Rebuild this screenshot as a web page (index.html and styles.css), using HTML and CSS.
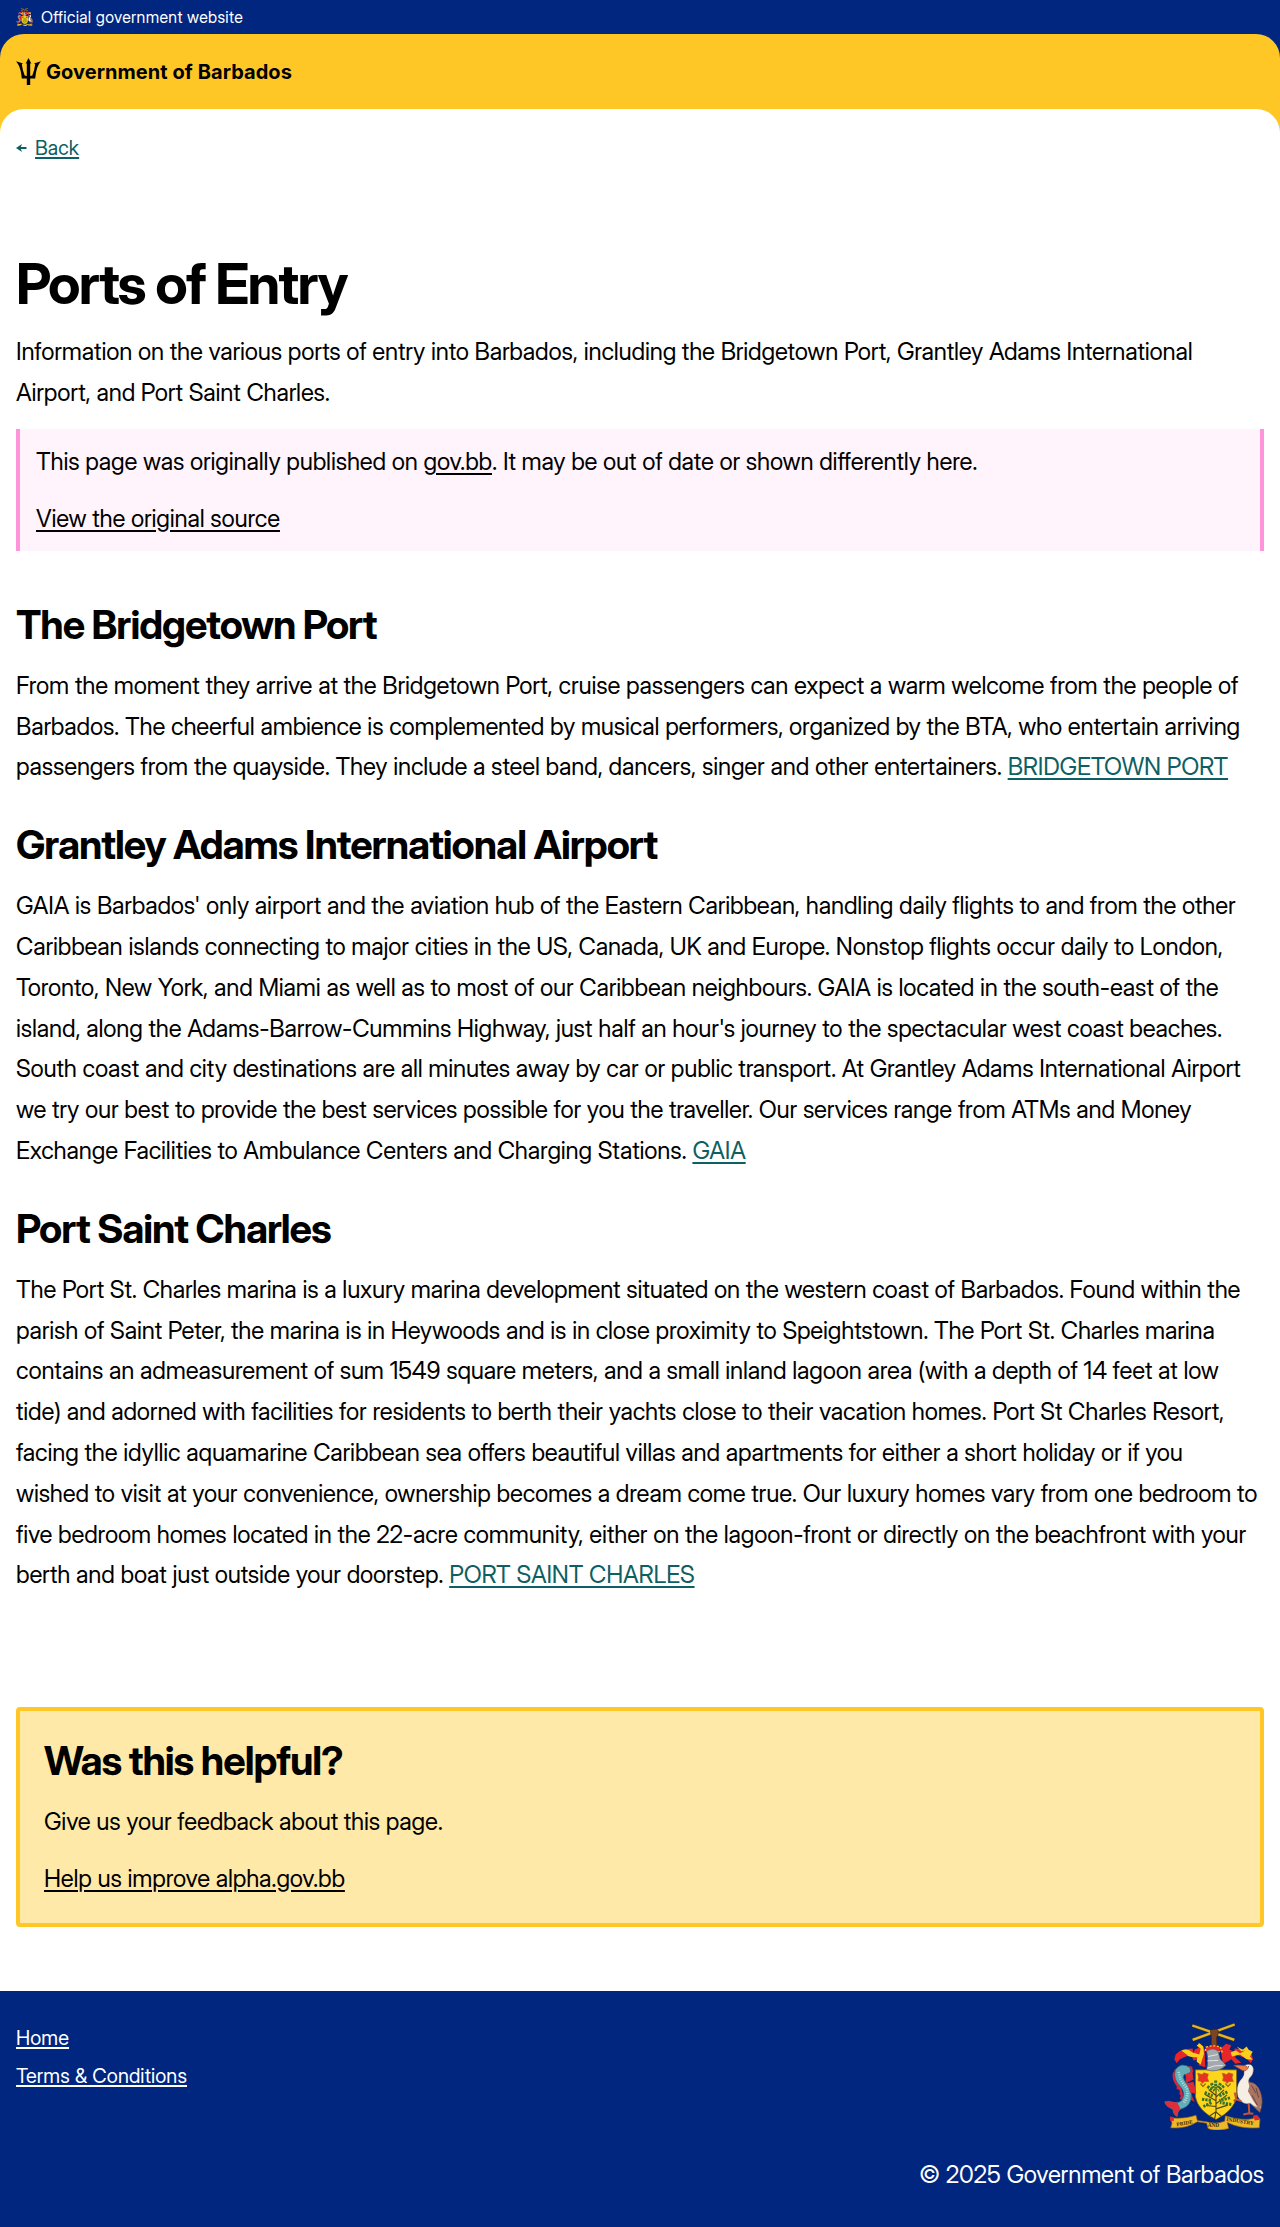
FILE: index.html
```html
<!DOCTYPE html>
<html lang="en">
<head>
<meta charset="utf-8">
<title>Ports of Entry</title>
<link rel="stylesheet" href="styles.css">
</head>
<body>
<div class="official"><svg class="official-crest" viewBox="-26 4 300 320" aria-hidden="true"><use href="#crest"/></svg><span>Official government website</span></div>
<div class="header-back">
  <header class="header">
    <a class="brand" href="#">
      <svg class="trident" viewBox="0 0 25 27" aria-hidden="true"><path d="M12.5 0L15.4 5.8 14.2 5.3V18L16.3 17.5Q18.3 13 19.2 6.2L18 5.5 25 3.3Q23.4 5 22.2 7.5 20 12 19.2 20.4H14.2V27H10.8V20.4H5.8Q5 12 2.8 7.5 1.6 5 0 3.3L7 5.5 5.8 6.2Q6.7 13 8.7 17.5L10.8 18V5.3L9.6 5.8z"/></svg>
      <span>Government of Barbados</span>
    </a>
  </header>
</div>
<div class="main-back">
  <main>
    <a class="back" href="#"><svg class="arrow" viewBox="0 0 11 8" aria-hidden="true"><path d="M0 4L6 0 4.8 3H10.5V5H4.8L6 8z"/></svg><span>Back</span></a>
    <h1>Ports of Entry</h1>
    <p class="intro">Information on the various ports of entry into Barbados, including the Bridgetown Port, Grantley Adams International Airport, and Port Saint Charles.</p>
    <aside class="notice">
      <p>This page was originally published on <a href="#">gov.bb</a>. It may be out of date or shown differently here.</p>
      <p><a href="#">View the original source</a></p>
    </aside>
    <article>
      <section>
        <h2>The Bridgetown Port</h2>
        <p>From the moment they arrive at the Bridgetown Port, cruise passengers can expect a warm welcome from the people of Barbados. The cheerful ambience is complemented by musical performers, organized by the BTA, who entertain arriving passengers from the quayside. They include a steel band, dancers, singer and other entertainers. <a href="#">BRIDGETOWN PORT</a></p>
      </section>
      <section>
        <h2>Grantley Adams International Airport</h2>
        <p>GAIA is Barbados' only airport and the aviation hub of the Eastern Caribbean, handling daily flights to and from the other Caribbean islands connecting to major cities in the US, Canada, UK and Europe. Nonstop flights occur daily to London, Toronto, New York, and Miami as well as to most of our Caribbean neighbours. GAIA is located in the south-east of the island, along the Adams-Barrow-Cummins Highway, just half an hour's journey to the spectacular west coast beaches. South coast and city destinations are all minutes away by car or public transport. At Grantley Adams International Airport we try our best to provide the best services possible for you the traveller. Our services range from ATMs and Money Exchange Facilities to Ambulance Centers and Charging Stations. <a href="#">GAIA</a></p>
      </section>
      <section>
        <h2>Port Saint Charles</h2>
        <p>The Port St. Charles marina is a luxury marina development situated on the western coast of Barbados. Found within the parish of Saint Peter, the marina is in Heywoods and is in close proximity to Speightstown. The Port St. Charles marina contains an admeasurement of sum 1549 square meters, and a small inland lagoon area (with a depth of 14 feet at low tide) and adorned with facilities for residents to berth their yachts close to their vacation homes. Port St Charles Resort, facing the idyllic aquamarine Caribbean sea offers beautiful villas and apartments for either a short holiday or if you<br>wished to visit at your convenience, ownership becomes a dream come true. Our luxury homes vary from one bedroom to five bedroom homes located in the 22-acre community, either on the lagoon-front or directly on the beachfront with your berth and boat just outside your doorstep. <a href="#">PORT SAINT CHARLES</a></p>
      </section>
    </article>
    <aside class="feedback">
      <h2>Was this helpful?</h2>
      <p>Give us your feedback about this page.</p>
      <p><a href="#">Help us improve alpha.gov.bb</a></p>
    </aside>
  </main>
</div>
<footer>
  <div class="footer-row">
    <nav><a href="#">Home</a><a href="#">Terms &amp; Conditions</a></nav>
    <svg class="footer-crest" viewBox="-26 4 300 320" role="img" aria-label="Coat of arms of Barbados">
      <g id="crest">
        <!-- crossed canes and raised fist -->
        <path d="M59 11L185 54M60 54L186 8" stroke="#5a3c08" stroke-width="10"/>
        <path d="M59 11L185 54M60 54L186 8" stroke="#e2b62c" stroke-width="7"/>
        <path d="M114 32q-3-9 8-10l10 0q8 3 5 13l-5 12 1 30h-17l0-30z" fill="#7b4525" stroke="#3c2010" stroke-width="2"/>
        <!-- mantling -->
        <path d="M12 124L5 112 9 98 20 88 38 82 60 80 62 92 50 100 34 106 22 112zM234 124L241 112 237 98 226 88 208 82 186 80 184 92 196 100 212 106 224 112z" fill="#e8262a"/>
        <path d="M96 84L84 66 76 64 78 78 66 84 58 104 62 116 80 112 78 130 98 136zM144 80L160 66 176 70 170 84 188 90 188 108 206 122 188 126 176 112 160 122 150 124z" fill="#e8262a"/>
        <path d="M26 86Q44 78 60 92L80 98 84 80 72 72 80 64 92 74 94 96 84 128 72 120 74 106Q48 108 42 98zM218 86L206 88 192 74 210 84 222 74 228 84 240 90 232 104 240 114 222 112 202 98 178 104 174 92 190 86 202 94z" fill="#f9cf1c"/>
        <path d="M100 76q24-8 44 0l4 14-50-2z" fill="#e8262a" stroke="#f9cf1c" stroke-width="4" stroke-dasharray="6 5"/>
        <!-- shield -->
        <path d="M68 144H192V224Q184 266 130 293Q75 266 68 224Z" fill="#ffd51c" stroke="#675016" stroke-width="2"/>
        <path d="M75 154l13 4 6-5 13 4-3 11 4 11-13 0-6 6-4-6-9-2 2-11zM149 154l13 4 6-5 13 4-3 11 4 11-13 0-6 6-4-6-9-2 2-11z" fill="#e83322" stroke="#a66a12" stroke-width="2"/>
        <path d="M83 185l8 9 8-9M158 185l8 9 8-9" fill="none" stroke="#9b7617" stroke-width="4"/>
        <!-- fig tree -->
        <path d="M130 195v76m0-50l-22-18m22 34l-34-20m34 37l-30-3m30-25l24-22m-24 42l33-27m-33 42l35-11m-35 20l-18 12m18-12l16 14m-16-14l-4 21" fill="none" stroke="#4d4517" stroke-width="3.5"/>
        <path d="M129 176v24M104 194l22 12M96 212l24 10M88 232l28 4M92 254l26-12M154 192l-18 14M164 210l-24 12M172 228l-32 8M176 248l-34-6M116 184l6 14M144 184l-8 14" fill="none" stroke="#347329" stroke-width="9" stroke-dasharray="7 3"/>
        <!-- helmet -->
        <path d="M102 88q20-14 35 1l5 22 18 19q-26 25-58 14 7-28 0-56z" fill="#a5a9ae" stroke="#59606a" stroke-width="2"/>
        <path d="M106 104l29-6m-31 19l32-1m-32 23q22-10 46-8" fill="none" stroke="#e4e7e8" stroke-width="3"/>
        <!-- dolphin -->
        <path d="M18 134L6 144 1 158 8 170 4 178 14 190 11 200 22 206 20 216 30 228M42 132L58 134 62 148 56 160 64 172 44 182 60 196 70 212 52 210 60 226 66 240 48 232 36 208z" fill="#d6283a" stroke="#8f1928" stroke-width="1"/>
        <path d="M52 138Q26 118 8 144 0 172 23 194 40 214 28 234 22 244 4 242L-12 238-24 240Q-20 256 0 262 2 280 14 284 14 268 24 262 58 254 56 216 52 196 38 180 28 166 35 158 50 160 54 148z" fill="#61adb8" stroke="#1a6773" stroke-width="2"/>
        <path d="M-24 240Q-20 256 0 262 2 280 14 284 14 268 24 262L14 242-12 238z" fill="#dc2f3e"/>
        <path d="M4 152Q-2 172 18 196 34 216 24 232" fill="none" stroke="#d6283a" stroke-width="6"/>
        <path d="M18 150q4 27 20 43 15 22-4 49" fill="none" stroke="#b5e0d9" stroke-width="8" stroke-dasharray="3 4"/>
        <path d="M36 158l22-10 4 18-16 4zM44 184L62 180 68 200 70 216 52 212z" fill="#dc2c35"/>
        <!-- pelican -->
        <path d="M222 180Q252 178 264 212 274 240 262 272 240 256 224 230z" fill="#a87463" stroke="#61443e" stroke-width="2"/>
        <path d="M216 130q23-8 26 11 2 16-13 30-5 14 6 28 5 32 30 58-18 0-32-13-23 8-37-19-7-29 6-48 19-18 10-39z" fill="#f7eee3" stroke="#a58d78" stroke-width="1"/>
        <path d="M183 131q11-3 37 1l6 8q-10 12-22 3z" fill="#f07d46" stroke="#893f27" stroke-width="2"/>
        <path d="M228 245l2 29-18 4m18-4l12 2m-36-38l-15-6-5-20m5 20l-8 6" fill="none" stroke="#c55534" stroke-width="6"/>
        <circle cx="227" cy="135" r="2"/>
        <path d="M232 184Q250 182 260 206 268 232 260 264 240 236 226 208z" fill="#a87463"/>
        <path d="M236 190l14 24m0-16l8 30m-20-8l16 30" stroke="#6d4540" stroke-width="3"/>
        <!-- motto ribbon -->
        <path d="M-7 288Q36 292 70 280L74 296 102 300Q128 308 156 298L158 282Q208 298 242 290L244 282 254 282 262 292 260 318 Q204 322 164 302L168 320Q128 330 106 320L102 304 74 300Q40 322-6 318L-2 304z" fill="#edb82a" stroke="#94600e" stroke-width="2"/>
        <path d="M-8 284l12 2-1 12-11-2zM242 282l12-2 8 14-16 2z" fill="#df292a"/>
      </g>
      <g class="motto">
        <text x="12" y="313" transform="rotate(-9 12 313)">PRIDE</text>
        <text x="105" y="317">AND</text>
        <text x="161" y="297" transform="rotate(9 161 297)">INDUSTRY</text>
      </g>
    </svg>
  </div>
  <p class="copyright">© 2025 Government of Barbados</p>
</footer>
</body>
</html>
```
FILE: styles.css
```css
* { box-sizing: border-box; }
body { margin: 0; background: #00267f; color: #000; font: 24px/1.7 "Inter Display", Inter, sans-serif; letter-spacing: -.17px; }
h1, h2, p { margin: 0; }
a { color: inherit; text-decoration-thickness: 2px; text-underline-offset: 2.5px; }
.official { height: 34px; padding: 0 16px; display: flex; align-items: center; gap: 8px; color: #fff; font-size: 16px; line-height: 24px; letter-spacing: .33px; }
.official-crest { width: 17px; height: 18px; }
.header-back { background: #00267f; }
.header { height: 99px; padding: 24px 16px; background: #ffc726; border-radius: 24px 24px 0 0; }
.brand { display: flex; gap: 5px; width: max-content; text-decoration: none; font-family: Inter, sans-serif; font-size: 20px; font-weight: 700; line-height: 28px; letter-spacing: .06px; }
.trident { width: 25px; height: 27px; }
.main-back { background: #ffc726; margin-top: -24px; border-radius: 24px 24px 0 0; }
main { padding: 24px 16px 64px; background: #fff; border-radius: 24px 24px 0 0; display: flex; flex-direction: column; align-items: stretch; }
.back { display: flex; align-items: center; gap: 8px; width: max-content; font-size: 20px; line-height: 30px; letter-spacing: .1px; color: #0e5f64; text-decoration: none; }
.back span { text-decoration: underline 2px; text-underline-offset: 2px; }
.arrow { width: 11px; height: 8px; fill: currentColor; }
h1 { margin-top: 89px; font-size: 56px; line-height: 64px; font-weight: 700; letter-spacing: -1.75px; }
.intro { margin-top: 16px; }
.notice { margin-top: 15.6px; padding: 13px 16px 11px; border: solid #ff94db; border-width: 0 4px; background: #fff4fb; display: flex; flex-direction: column; gap: 16px; }
article { margin-top: 49px; display: flex; flex-direction: column; gap: 32px; }
h2 { margin-bottom: 16px; font-size: 40px; line-height: 50px; font-weight: 700; letter-spacing: -1.06px; }
section a { color: #0e5f64; }
.feedback { margin-top: 111px; padding: 25px 24px 23px; border: 4px solid #ffc726; border-radius: 4px; background: #ffe9a8; }
.feedback p + p { margin-top: 16px; }
footer { padding: 32px 16px 30px; color: #fff; background: #00267f; }
.footer-row { display: flex; justify-content: space-between; align-items: flex-start; }
nav { display: flex; flex-direction: column; gap: 8px; font-size: 20px; line-height: 30px; letter-spacing: .1px; }
nav a { text-underline-offset: 2px; }
.footer-crest { width: 100px; height: 107px; }
.motto { font: bold 16px "Liberation Serif", serif; letter-spacing: 0; fill: #3b2b08; }
.copyright { margin-top: 25px; text-align: right; }
```
